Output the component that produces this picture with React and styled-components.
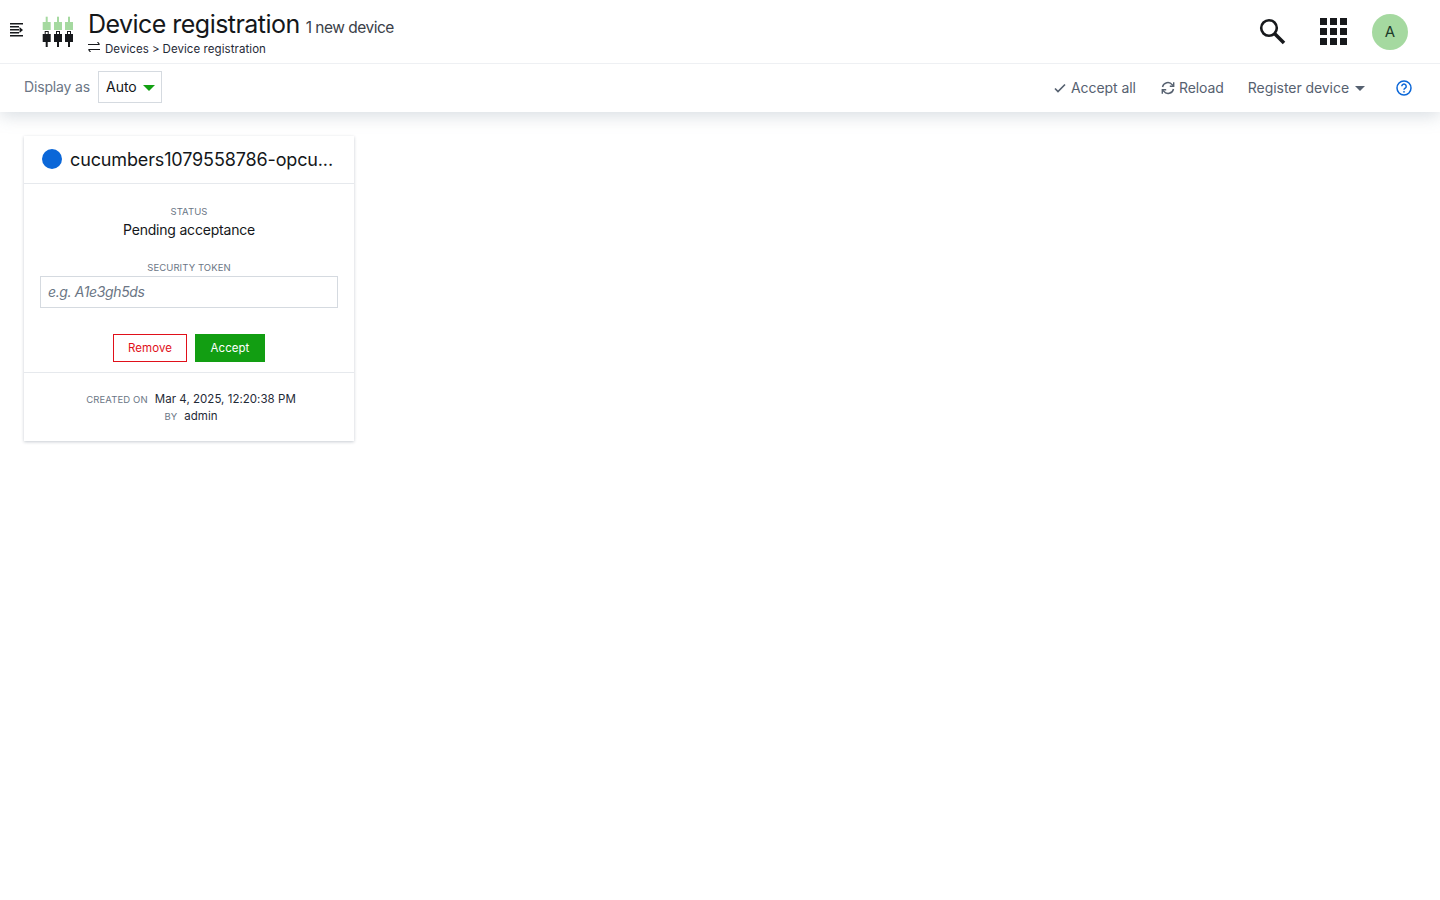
import React from "react";
import styled, { createGlobalStyle } from "styled-components";

const Global = createGlobalStyle`
  html, body { margin: 0; padding: 0; background: #fff; }
  body { font-family: Inter, "Noto Sans", Arial, sans-serif; color: #14171a; }
`;
const Page = styled.div`min-height: 900px; background: #fff;`;
const Top = styled.header`
  position: relative;
  box-shadow: 0 4px 16px rgba(120,135,155,.28);
  background: #fff;
`;
const Header = styled.div`
  height: 63px;
  border-bottom: 1px solid #eef0f3;
  display: flex;
  align-items: center;
  padding-left: 9px;
`;
const Burger = styled.svg`width: 15px; height: 14px; margin-top: -3px; flex: none;`;
const Logo = styled.svg`width: 34px; height: 32px; margin-left: 17px; flex: none;`;
const TitleBlock = styled.div`margin-left: 13px; display: flex; flex-direction: column; margin-top: 1px;`;
const TitleRow = styled.div`display: flex; align-items: baseline; gap: 6px; white-space: nowrap;`;
const Title = styled.h1`margin: 0; font-size: 25px; line-height: 30px; font-weight: 400; letter-spacing: -.54px; color: #14171a;`;
const Sub = styled.span`font-size: 15.500px; color: #3b4148; letter-spacing: -.5px;`;
const Crumbs = styled.div`display: flex; align-items: center; font-size: 11.500px; line-height: 14px; margin-top: 3px; color: #1f2a37; white-space: nowrap; letter-spacing: .07px;`;
const CrumbIcon = styled.svg`width: 12px; height: 10px; margin-right: 5px; margin-top: -3px;`;
const Sep = styled.span`margin: 0 3px;`;
const Spacer = styled.div`flex: 1;`;
const SearchIcon = styled.svg`width: 28px; height: 28px; margin-left: -1px; margin-top: -2px; flex: none;`;
const Apps = styled.div`
  display: grid; grid-template-columns: repeat(3, 7px); grid-auto-rows: 7px; gap: 3px;
  margin-left: 34px; flex: none; margin-top: -1px;
`;
const Cell = styled.i`display: block; background: #17191c;`;
const Avatar = styled.div`
  width: 36px; height: 36px; border-radius: 50%; background: #a5d9a0; color: #1d3b2a;
  display: flex; align-items: center; justify-content: center; font-size: 15px;
  margin: 0 32px 0 25px; flex: none;
`;
const Toolbar = styled.div`
  height: 48px; display: flex; align-items: center; padding-left: 24px;
`;
const Label = styled.span`font-size: 14px; color: #6b7685; letter-spacing: -.15px; margin-top: -4px;`;
const Select = styled.div`
  height: 30px; border: 1px solid #d5dae0; margin-left: 8px; margin-top: -2px;
  display: flex; align-items: center; padding-left: 7px; box-sizing: content-box;
  width: 55px; font-size: 14px; color: #14171a; letter-spacing: -.05px;
  line-height: 28px;
`;
const Caret = styled.i`
  display: block; width: 0; height: 0; margin-left: ${p => p.$ml || 6}px; margin-top: 2px;
  border-left: ${p => p.$s}px solid transparent; border-right: ${p => p.$s}px solid transparent;
  border-top: ${p => p.$s}px solid ${p => p.$c};
`;
const Action = styled.div`
  display: flex; align-items: center; font-size: 14px; color: #566170; margin-left: ${p => p.$ml}px; white-space: nowrap;
  letter-spacing: -.06px; margin-top: -1px;
`;
const ActionIcon = styled.svg`width: 14px; height: 14px; margin-right: ${p => p.$mr}px; flex: none;`;
const Help = styled.svg`width: 18px; height: 18px; margin-left: 30px; margin-right: 27px; flex: none;`;
const Content = styled.main`padding: 24px;`;
const Card = styled.section`
  width: 330px; background: #fff; box-shadow: 0 1px 3px rgba(70,85,105,.3);
`;
const CardHead = styled.div`
  height: 47px; border-bottom: 1px solid #e6e9ed; display: flex; align-items: center; padding: 0 18px;
`;
const Dot = styled.i`width: 20px; height: 20px; border-radius: 50%; background: #0b67d8; flex: none; margin-top: -1px;`;
const Name = styled.div`
  margin-left: 8px; font-size: 18px; color: #14171a; white-space: nowrap; overflow: hidden; text-overflow: ellipsis; letter-spacing: -.14px;
`;
const Body = styled.div`
  height: 189px; border-bottom: 1px solid #e6e9ed; box-sizing: border-box;
  display: flex; flex-direction: column; align-items: center; padding: 22px 16px 0;
`;
const Small = styled.div`font-size: 9.500px; line-height: 12px; color: #6b7685; text-transform: uppercase; letter-spacing: .08px;`;
const Status = styled.div`font-size: 14px; line-height: 20px; margin-top: 2px; margin-bottom: 22px; color: #14171a; letter-spacing: -.2px;`;
const Token = styled.input`
  width: 100%; height: 32px; box-sizing: border-box; border: 1px solid #d5dae0; padding: 0 7px 2px; margin-top: 2px;
  font: italic 14px Inter, sans-serif; letter-spacing: -.36px; outline: none; border-radius: 0; background: #fff;
  &::placeholder { color: #6b7685; opacity: 1; }
`;
const Buttons = styled.div`display: flex; gap: 8px; margin-top: 26px;`;
const Btn = styled.button`
  height: 28px; width: ${p => p.$w}px; box-sizing: border-box; font: 11.500px Inter, sans-serif; padding: 0; border-radius: 0;
  border: 1px solid ${p => p.$border}; background: ${p => p.$bg}; color: ${p => p.$fg}; letter-spacing: .05px;
`;
const Foot = styled.div`
  height: 68px; box-sizing: border-box; padding: 19px 0 0 4px; display: flex; flex-direction: column; align-items: center;
`;
const FootRow = styled.div`display: flex; align-items: baseline; gap: 7px; height: 17px; font-size: 11.500px; color: #1f2a37; letter-spacing: .03px;`;
const FootLabel = styled.span`font-size: 9.500px; color: #6b7685; text-transform: uppercase; letter-spacing: .13px;`;

export default function App() {
  return (
    <Page>
      <Global />
      <Top>
        <Header>
          <Burger viewBox="0 0 15 14" fill="none">
            <path d="M1 .8h13M1 3.800h9M1 6.800h9M1 9.800h9M1 12.800h13" stroke="#17191c" strokeWidth="1.500" />
            <path d="M10.500 4l3.500 3-3.500 3z" fill="#17191c" />
          </Burger>
          <Logo viewBox="0 0 34 32">
            <g fill="#a5d9a0">
              <rect x="1.700" y="6" width="8" height="8" /><rect x="4.700" y="0.700" width="2" height="5.300" />
              <rect x="13" y="6" width="8" height="8" /><rect x="16" y="0.700" width="2" height="5.300" />
              <rect x="24" y="6" width="8" height="8" /><rect x="27" y="0.700" width="2" height="5.300" />
            </g>
            <g fill="#17191c">
              <path fillRule="evenodd" d="M1.700 18h2v-3h4v3h2v8h-3v5h-2v-5h-3zM4.700 16v2h2v-2z" />
              <path fillRule="evenodd" d="M13 18h2v-3h4v3h2v8h-3v5h-2v-5h-3zM16 16v2h2v-2z" />
              <path fillRule="evenodd" d="M24 18h2v-3h4v3h2v8h-3v5h-2v-5h-3zM27 16v2h2v-2z" />
            </g>
          </Logo>
          <TitleBlock>
            <TitleRow>
              <Title>Device registration</Title>
              <Sub>1 new device</Sub>
            </TitleRow>
            <Crumbs>
              <CrumbIcon viewBox="0 0 12 10" fill="none" stroke="#17191c" strokeWidth="1.200">
                <path d="M0 2.500h11.500M9.500 0l2 2.500M12 7.500H.5M2.500 10l-2-2.500" />
              </CrumbIcon>
              Devices<Sep>&gt;</Sep>Device registration
            </Crumbs>
          </TitleBlock>
          <Spacer />
          <SearchIcon viewBox="0 0 28 28" fill="none" stroke="#17191c">
            <circle cx="11" cy="11" r="7.800" strokeWidth="2.600" />
            <path d="M16.500 16.500l9.500 9.500" strokeWidth="3.600" />
          </SearchIcon>
          <Apps>{Array.from({ length: 9 }, (_, i) => <Cell key={i} />)}</Apps>
          <Avatar>A</Avatar>
        </Header>
        <Toolbar>
          <Label>Display as</Label>
          <Select>Auto<Caret $c="#12a012" $s={6} /></Select>
          <Spacer />
          <Action $ml={0}>
            <ActionIcon $mr={4} viewBox="0 0 14 14" fill="none" stroke="#566170" strokeWidth="1.700"><path d="M2 7.500l3 3 7-7" /></ActionIcon>
            Accept all
          </Action>
          <Action $ml={25}>
            <ActionIcon $mr={4} viewBox="0 0 14 14" fill="none" stroke="#566170" strokeWidth="1.400">
              <path d="M1.500 6A5.500 5.500 0 0 1 11.300 3.800L12.500 5M12.500 8A5.500 5.500 0 0 1 2.700 10.200L1.500 9" />
              <path d="M12.700 1.300v3.900H8.800M1.300 12.700V8.800h3.900" />
            </ActionIcon>
            Reload
          </Action>
          <Action $ml={24}>
            Register device<Caret $c="#566170" $s={5} $ml={6} />
          </Action>
          <Help viewBox="0 0 18 18" fill="none" stroke="#0b67d8" strokeWidth="1.500">
            <circle cx="9" cy="9" r="7" />
            <path d="M6.800 7.200a2.200 2.200 0 1 1 3.400 1.900c-.8.500-1.200.9-1.200 1.700" />
            <circle cx="9" cy="12.800" r=".6" fill="#0b67d8" strokeWidth=".6" />
          </Help>
        </Toolbar>
      </Top>
      <Content>
        <Card>
          <CardHead>
            <Dot />
            <Name>cucumbers1079558786-opcu...</Name>
          </CardHead>
          <Body>
            <Small>Status</Small>
            <Status>Pending acceptance</Status>
            <Small>Security token</Small>
            <Token placeholder="e.g. A1e3gh5ds" />
            <Buttons>
              <Btn $w={74} $border="#e0101a" $bg="#fff" $fg="#e0101a">Remove</Btn>
              <Btn $w={70} $border="#129e12" $bg="#129e12" $fg="#fff">Accept</Btn>
            </Buttons>
          </Body>
          <Foot>
            <FootRow><FootLabel>Created on</FootLabel>Mar 4, 2025, 12:20:38 PM</FootRow>
            <FootRow><FootLabel>By</FootLabel>admin</FootRow>
          </Foot>
        </Card>
      </Content>
    </Page>
  );
}
